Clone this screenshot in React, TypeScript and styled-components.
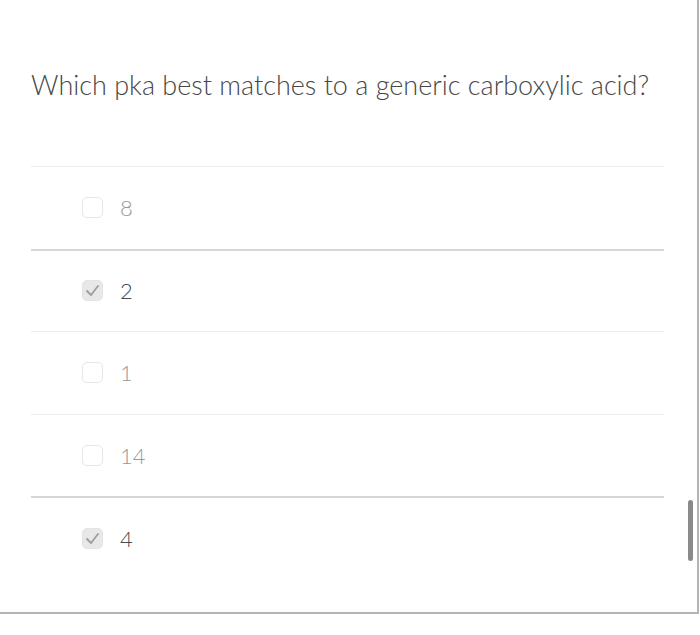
import React from 'react'
import styled, { createGlobalStyle } from 'styled-components'

const GlobalStyle = createGlobalStyle`
  html, body {
    margin: 0;
    padding: 0;
    background: #ffffff;
  }
  body {
    font-family: Lato, "Noto Sans", "Liberation Sans", sans-serif;
  }
`

const Panel = styled.div`
  position: relative;
  box-sizing: border-box;
  width: 699px;
  height: 614px;
  border-right: 2px solid #b4b4b4;
  border-bottom: 2px solid #b4b4b4;
  padding: 69px 33px 0 31px;
`

const Question = styled.h2`
  margin: 0;
  font-size: 27px;
  font-weight: 300;
  line-height: 32px;
  color: #474747;
`

const AnswerList = styled.ul`
  list-style: none;
  margin: 65px 0 0;
  padding: 0;
`

const AnswerRow = styled.li<{ $selected: boolean }>`
  box-sizing: border-box;
  display: flex;
  align-items: center;
  gap: 17px;
  height: 82.5px;
  padding-left: 51px;
  border-top: ${(p) => (p.$selected ? '2px solid #d6d6d6' : '1px solid #ececec')};
`

const Box = styled.span<{ $checked: boolean }>`
  box-sizing: border-box;
  display: flex;
  align-items: center;
  justify-content: center;
  width: 21px;
  height: 21px;
  border-radius: 5px;
  border: 1px solid ${(p) => (p.$checked ? '#e4e4e4' : '#e6e6e6')};
  background: ${(p) => (p.$checked ? '#e8e8e8' : '#ffffff')};
`

const Label = styled.span<{ $checked: boolean }>`
  font-size: 22px;
  font-weight: 300;
  color: ${(p) => (p.$checked ? '#4a4a4a' : '#999999')};
`

const ScrollThumb = styled.div`
  position: absolute;
  right: 4px;
  top: 500px;
  width: 5px;
  height: 61px;
  border-radius: 3px;
  background: #8a8a8a;
`

const answers = [
  { label: '8', checked: false },
  { label: '2', checked: true },
  { label: '1', checked: false },
  { label: '14', checked: false },
  { label: '4', checked: true },
]

const Check = () => (
  <svg width="15" height="13" viewBox="0 0 15 13">
    <path d="M2 7 L6 11 L13 2" fill="none" stroke="#9c9c9c" strokeWidth="1.8" strokeLinecap="round" strokeLinejoin="round" />
  </svg>
)

const App: React.FC = () => {
  return (
    <>
      <GlobalStyle />
      <Panel>
        <Question>Which pka best matches to a generic carboxylic acid?</Question>
        <AnswerList>
          {answers.map((a, index) => (
            <AnswerRow key={index} $selected={a.checked}>
              <Box $checked={a.checked}>{a.checked && <Check />}</Box>
              <Label $checked={a.checked}>{a.label}</Label>
            </AnswerRow>
          ))}
        </AnswerList>
        <ScrollThumb />
      </Panel>
    </>
  )
}

export default App
